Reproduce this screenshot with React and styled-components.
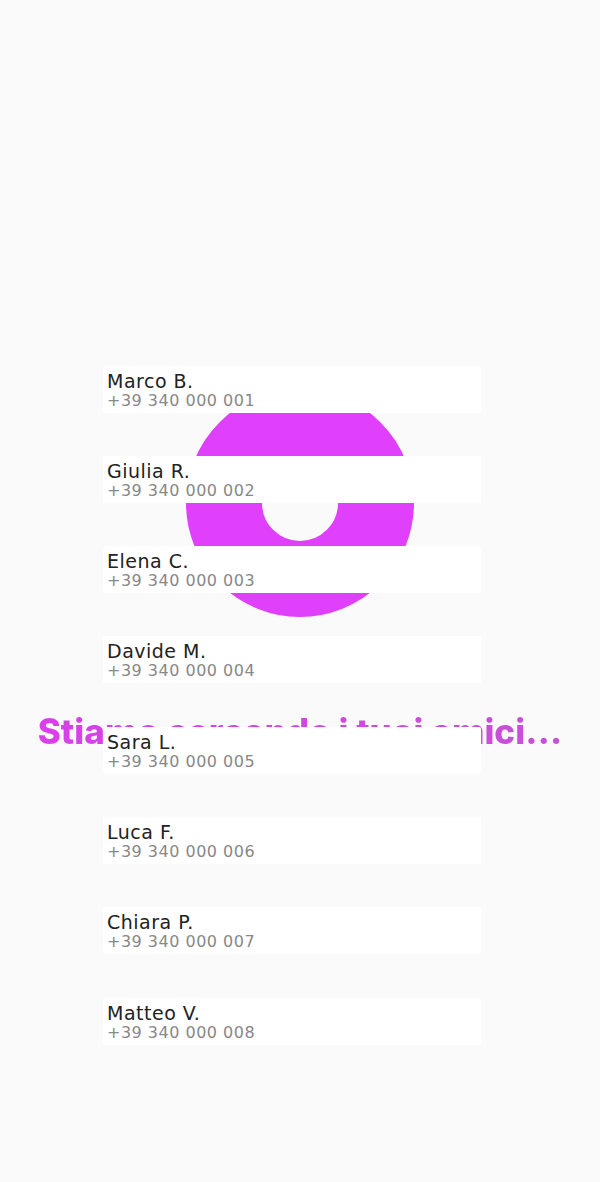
import styled, { createGlobalStyle } from "styled-components";

const GlobalStyle = createGlobalStyle`
    html, body {
        margin: 0;
        padding: 0;
        background: #fafafa;
    }
    body {
        font-family: "DejaVu Sans", sans-serif;
    }
`;

const StyledPage = styled.main`
    width: 100%;
    min-height: 100vh;
    display: grid;
    background: #fafafa;

    > * {
        grid-area: 1 / 1;
    }
`;

const Loader = styled.section`
    display: flex;
    flex-direction: column;
    align-items: center;
    padding-top: 389px;
`;

const Ring = styled.div`
    width: 228px;
    height: 228px;
    box-sizing: border-box;
    border-radius: 50%;
    border: 76px solid #e040fb;
`;

const Title = styled.h1`
    margin: 94px 0 0;
    font-family: Inter, "DejaVu Sans", sans-serif;
    font-weight: 800;
    font-size: 35px;
    line-height: 40px;
    letter-spacing: 0.05px;
    white-space: nowrap;
    background: linear-gradient(90deg, #d93fea, #c552d6);
    -webkit-background-clip: text;
    background-clip: text;
    color: transparent;
`;

const ContactList = styled.ul`
    list-style: none;
    margin: 0;
    padding: 365.5px 16px 0 0;
    display: flex;
    flex-direction: column;
    align-items: center;
    gap: 43.3px;
`;

const Contact = styled.li`
    width: 378px;
    height: 47px;
    box-sizing: border-box;
    padding: 4px 4px;
    background: #fff;
    border-radius: 2px;
    display: flex;
    flex-direction: column;
`;

const Name = styled.span`
    font-size: 19px;
    line-height: 22px;
    letter-spacing: 0.5px;
    color: #222;
`;

const Phone = styled.span`
    font-size: 16px;
    line-height: 18px;
    letter-spacing: 0.5px;
    color: #888;
`;

const contacts = [
    ["Marco B.", "+39 340 000 001"],
    ["Giulia R.", "+39 340 000 002"],
    ["Elena C.", "+39 340 000 003"],
    ["Davide M.", "+39 340 000 004"],
    ["Sara L.", "+39 340 000 005"],
    ["Luca F.", "+39 340 000 006"],
    ["Chiara P.", "+39 340 000 007"],
    ["Matteo V.", "+39 340 000 008"],
];

function App() {
    return (
        <>
            <GlobalStyle />
            <StyledPage>
                <Loader>
                    <Ring />
                    <Title>Stiamo cercando i tuoi amici…</Title>
                </Loader>
                <ContactList>
                    {contacts.map(([name, phone]) => (
                        <Contact key={phone}>
                            <Name>{name}</Name>
                            <Phone>{phone}</Phone>
                        </Contact>
                    ))}
                </ContactList>
            </StyledPage>
        </>
    );
}

export default App;
